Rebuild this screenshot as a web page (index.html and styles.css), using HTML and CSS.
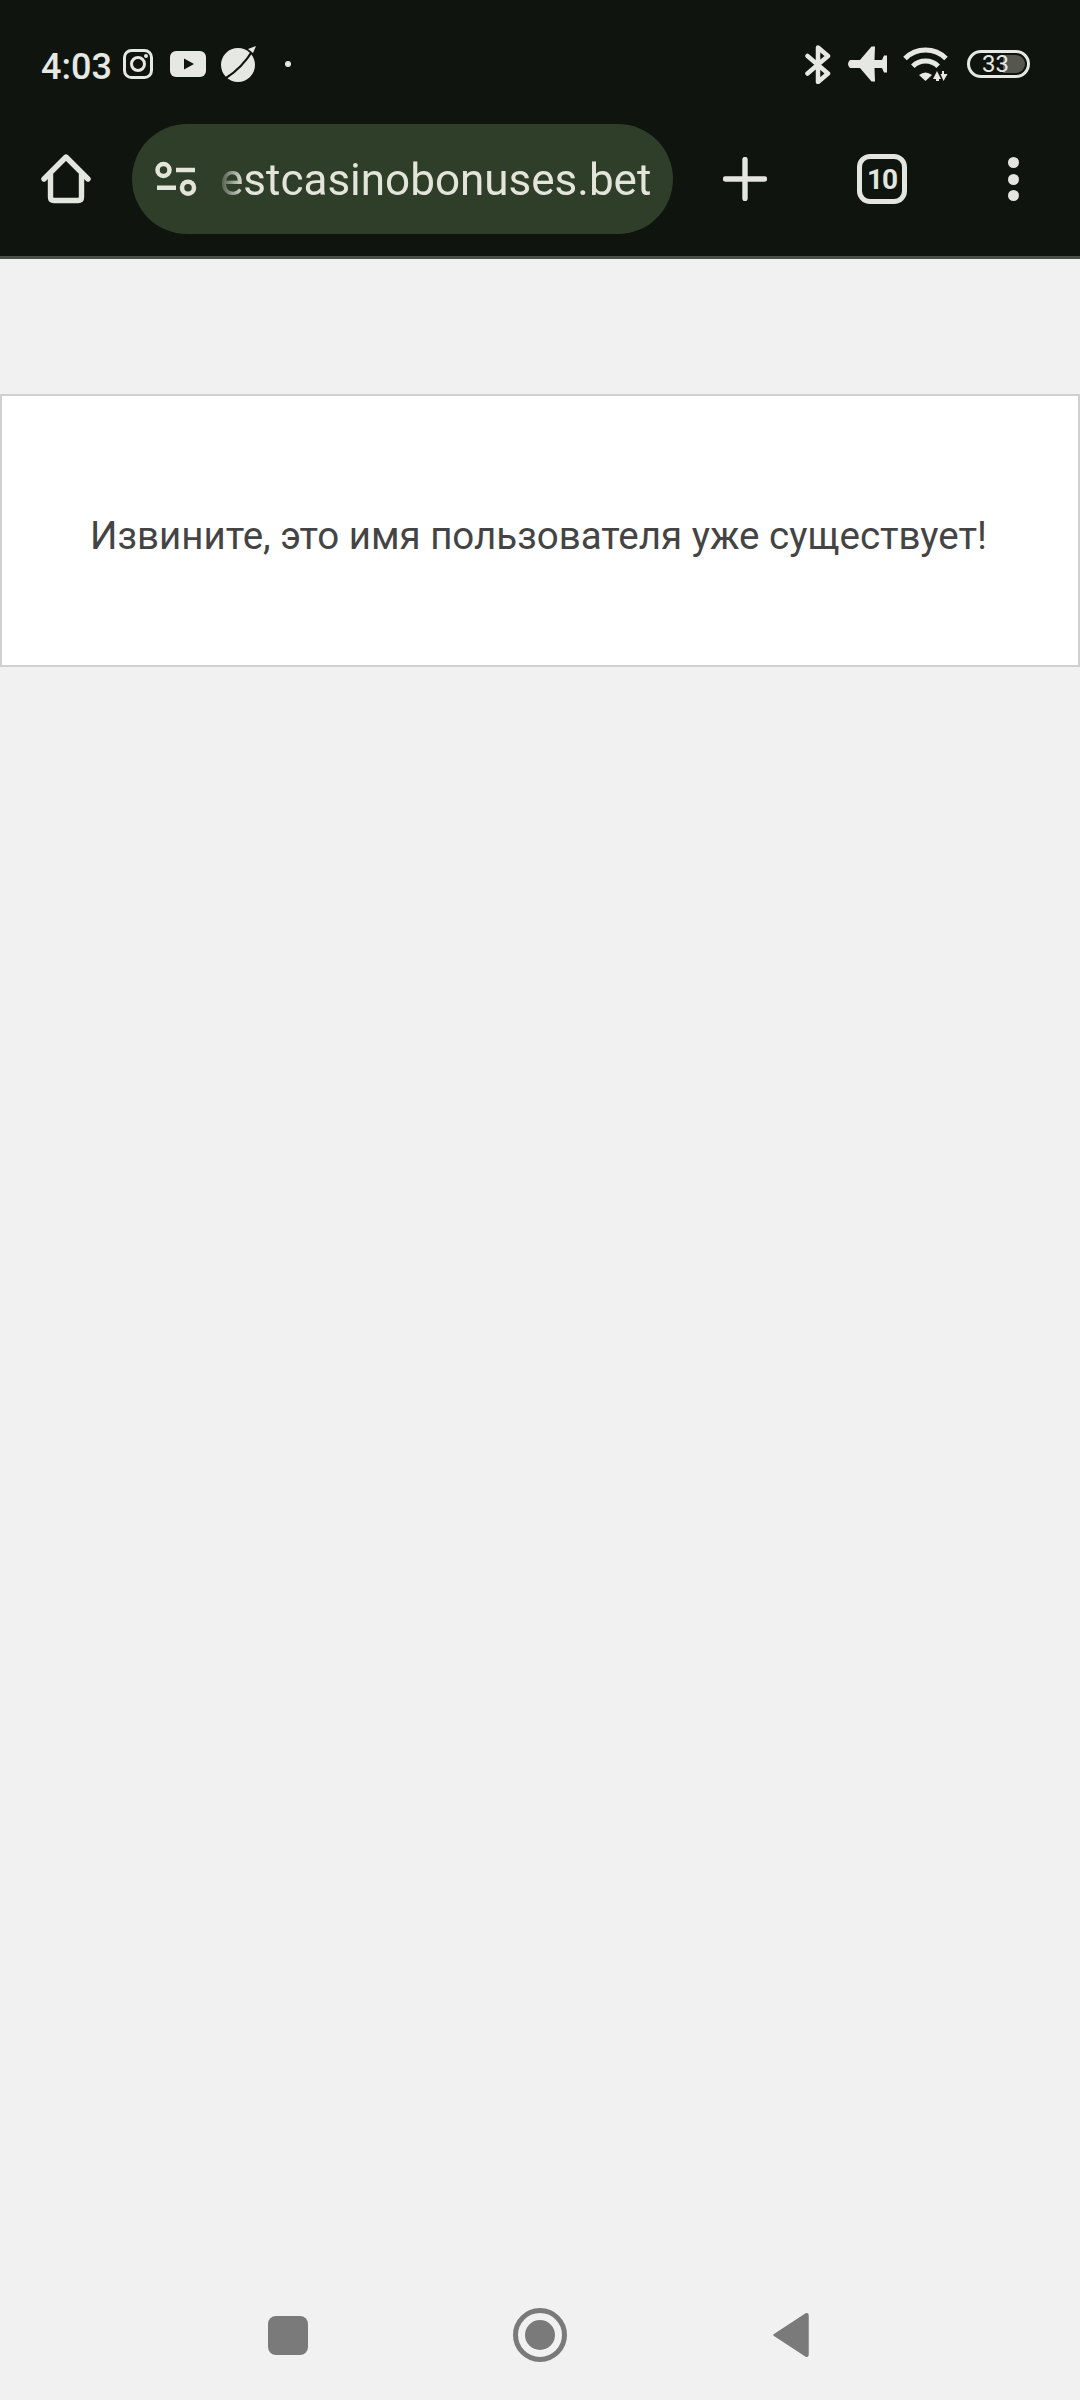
FILE: index.html
```html
<!DOCTYPE html>
<html lang="ru">
<head>
    <meta charset="UTF-8">
    <meta name="viewport" content="width=device-width, initial-scale=1.0">
    <title>Извините</title>
    <link rel="stylesheet" href="styles.css">
</head>
<body>

<header class="browser-top">
    <div class="status-bar">
        <span class="clock">4:03</span>
        <svg class="ico-insta" width="30" height="30" viewBox="0 0 30 30">
            <rect x="1.5" y="1.5" width="27" height="27" rx="7" fill="none" stroke="#e6e8e3" stroke-width="3"/>
            <circle cx="15" cy="15" r="6.5" fill="none" stroke="#e6e8e3" stroke-width="3"/>
            <circle cx="23" cy="7" r="2" fill="#e6e8e3"/>
        </svg>
        <svg class="ico-yt" width="36" height="26" viewBox="0 0 36 26">
            <rect width="36" height="26" rx="6" fill="#e6e8e3"/>
            <path d="M14 7.5 L24 13 L14 18.5 Z" fill="#0f140e"/>
        </svg>
        <svg class="ico-planet" width="36" height="36" viewBox="0 0 36 36">
            <circle cx="18" cy="19" r="17" fill="#e6e8e3"/>
            <path d="M33 4 Q22 22 6 32" fill="none" stroke="#0f140e" stroke-width="2.2"/>
            <path d="M36 0 L33 7 L28 3 Z" fill="#e6e8e3"/>
        </svg>
        <span class="status-dot"></span>
        <div class="status-right">
            <svg class="ico-bt" width="26" height="39" viewBox="0 0 26 39">
                <path d="M2.5 11 L23 28.5 L13 37 V2.5 L23 11 L2.5 28.5" fill="none" stroke="#e6e8e3" stroke-width="4.5" stroke-linejoin="round" stroke-linecap="round"/>
            </svg>
            <svg class="ico-plane" width="40" height="36" viewBox="0 0 40 36">
                <path d="M3 14 H13 L24.5 0.5 H28 L27.5 14 H35 L37 9.5 H40 V26.5 H37 L35 22 H27.5 L28 35.5 H24.5 L13 22 H3 Q-1 18 3 14 Z" fill="#e6e8e3"/>
            </svg>
            <svg class="ico-wifi" width="45" height="34" viewBox="0 0 45 34">
                <path d="M2 11.5 A29 29 0 0 1 43 11.5" fill="none" stroke="#e6e8e3" stroke-width="5"/>
                <path d="M9.8 19.3 A18 18 0 0 1 35.2 19.3" fill="none" stroke="#e6e8e3" stroke-width="5"/>
                <path d="M16 28 Q22.5 23 29 28 L22.5 34 Z" fill="#e6e8e3"/>
                <path d="M34 24 L38 32 H36 V34 H33 V32 H30 Z M41 24 V27 H44.5 L40.5 34 L37.5 27 H39 V24 Z" fill="#e6e8e3"/>
            </svg>
            <div class="battery">
                <span class="battery-fill"></span>
                <span class="battery-num">33</span>
            </div>
        </div>
    </div>

    <div class="toolbar">
        <svg class="ico-home" width="50" height="50" viewBox="0 0 50 50">
            <path d="M3 25 L25 3 L47 25" fill="none" stroke="#e3e5df" stroke-width="5.4" stroke-linecap="round" stroke-linejoin="round"/>
            <path d="M9.5 20 V43 Q9.5 46.5 13 46.5 H37 Q40.5 46.5 40.5 43 V20" fill="none" stroke="#e3e5df" stroke-width="5.4"/>
        </svg>
        <div class="url-pill">
            <svg class="ico-tune" width="42" height="36" viewBox="0 0 42 36">
                <circle cx="8.5" cy="9" r="6" fill="none" stroke="#e3e5da" stroke-width="4.5"/>
                <path d="M21 9 H40 M2 26.7 H21" stroke="#e3e5da" stroke-width="4.5"/>
                <circle cx="33" cy="26.7" r="6" fill="none" stroke="#e3e5da" stroke-width="4.5"/>
            </svg>
            <span class="url-text">estcasinobonuses.bet</span>
        </div>
        <svg class="ico-plus" width="44" height="44" viewBox="0 0 44 44">
            <path d="M2.5 22 H41.5 M22 2.5 V41.5" stroke="#e3e5df" stroke-width="5.4" stroke-linecap="round"/>
        </svg>
        <div class="tabs-count">10</div>
        <div class="menu-dots"><span></span><span></span><span></span></div>
    </div>
</header>

<main class="page">
    <div class="message-card">
        <p>Извините, это имя пользователя уже существует!</p>
    </div>
</main>

<nav class="nav-bar">
    <span class="nav-square"></span>
    <svg width="54" height="54" viewBox="0 0 54 54">
        <circle cx="27" cy="27" r="24.5" fill="none" stroke="#7a7a7a" stroke-width="5"/>
        <circle cx="27" cy="27" r="15" fill="#7a7a7a"/>
    </svg>
    <svg width="37" height="46" viewBox="0 0 37 46">
        <path d="M2 23 L34 2 Q36 1 36 4 V42 Q36 45 34 44 Z" fill="#7a7a7a" stroke="#7a7a7a" stroke-width="1.5" stroke-linejoin="round"/>
    </svg>
</nav>

</body>
</html>
```

FILE: styles.css
```css
body {
    margin: 0;
    width: 1080px;
    height: 2400px;
    display: flex;
    flex-direction: column;
    background-color: #f1f1f1;
    font-family: Roboto, "Liberation Sans", sans-serif;
}

.browser-top {
    background-color: #0f140e;
    border-bottom: 3px solid #4b4e46;
}

.status-bar {
    height: 124px;
    padding: 4px 50px 0 41px;
    box-sizing: border-box;
    display: flex;
    align-items: center;
    color: #e6e8e3;
}

.clock {
    font-size: 36px;
    font-weight: 500;
    width: 82px;
    padding-top: 5px;
}

.ico-yt {
    margin-left: 17px;
}

.ico-planet {
    margin-left: 14px;
}

.status-dot {
    width: 6px;
    height: 6px;
    margin-left: 29px;
    border-radius: 50%;
    background-color: #e6e8e3;
}

.status-right {
    margin-left: auto;
    display: flex;
    align-items: center;
}

.ico-plane {
    margin-left: 16px;
}

.ico-wifi {
    margin-left: 16px;
}

.battery {
    position: relative;
    width: 63px;
    height: 28px;
    margin-left: 19px;
    box-sizing: border-box;
    border: 3px solid #e6e8e3;
    border-radius: 14px;
    display: flex;
    align-items: center;
    justify-content: center;
}

.battery-fill {
    position: absolute;
    top: 2px;
    right: 2px;
    bottom: 2px;
    width: 22px;
    border-radius: 0 10px 10px 0;
    background-color: #55574f;
}

.battery-num {
    position: relative;
    font-size: 24px;
    margin-right: 6px;
}

.toolbar {
    height: 132px;
    padding-left: 41px;
    display: flex;
    align-items: flex-start;
}

.ico-home {
    margin-top: 30px;
}

.url-pill {
    width: 541px;
    height: 110px;
    margin-left: 41px;
    padding-left: 23px;
    box-sizing: border-box;
    border-radius: 55px;
    background-color: #2f3e28;
    display: flex;
    align-items: center;
}

.url-text {
    margin-left: 23px;
    padding-top: 2px;
    font-size: 44px;
    color: #e3e5da;
    white-space: nowrap;
    -webkit-mask-image: linear-gradient(to right, rgba(0, 0, 0, 0.15), #000 24px);
    mask-image: linear-gradient(to right, rgba(0, 0, 0, 0.15), #000 24px);
}

.ico-plus {
    margin-top: 33px;
    margin-left: 50px;
}

.tabs-count {
    width: 50px;
    height: 50px;
    margin-top: 30px;
    margin-left: 90px;
    box-sizing: border-box;
    border: 5px solid #e3e5df;
    border-radius: 13px;
    color: #e3e5df;
    font-size: 28px;
    font-weight: 700;
    letter-spacing: -1px;
    display: flex;
    align-items: center;
    justify-content: center;
}

.menu-dots {
    margin-top: 33px;
    margin-left: 101px;
    display: flex;
    flex-direction: column;
    gap: 5.5px;
}

.menu-dots span {
    width: 11px;
    height: 11px;
    border-radius: 50%;
    background-color: #e3e5df;
}

.page {
    flex: 1;
    padding-top: 135px;
}

.message-card {
    height: 273px;
    padding: 10px 3px 0 0;
    box-sizing: border-box;
    background-color: white;
    border: 2px solid #d0d0d0;
    display: flex;
    align-items: center;
    justify-content: center;
}

.message-card p {
    margin: 0;
    font-size: 38.5px;
    color: #444;
}

.nav-bar {
    height: 130px;
    padding-right: 3px;
    display: flex;
    align-items: center;
    justify-content: center;
    gap: 205px;
}

.nav-square {
    width: 40px;
    height: 39px;
    border-radius: 8px;
    background-color: #7a7a7a;
}
```
